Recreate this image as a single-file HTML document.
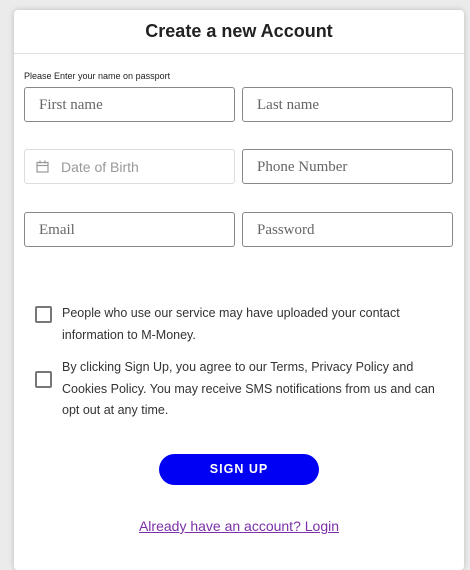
<!DOCTYPE html>
<html><head><style>
body{margin:0;width:470px;height:548px;background:#ebebeb;position:relative;overflow:hidden;font-family:"Liberation Sans",sans-serif}
.card{position:absolute;left:14px;top:10px;width:450px;height:560px;background:#fff;border-radius:4px;box-shadow:0 0 6px rgba(0,0,0,.2)}
.h{position:absolute;left:0;right:0;top:0;height:43px;border-bottom:1px solid #e0e0e0;text-align:center;line-height:42px;font-size:18px;font-weight:bold;color:#222}
.in{position:absolute;box-sizing:border-box;width:211px;height:35px;border:1px solid #888;border-radius:3px;font-family:"Liberation Serif",serif;font-size:15px;color:#666;line-height:35px;padding-left:14px}
.lbl{position:absolute;left:10px;top:61px;font-size:9px;color:#222}
.cb{position:absolute;left:21px;width:13px;height:13px;border:2px solid #777;border-radius:2px}
.t{position:absolute;left:48px;font-size:12.5px;line-height:21.5px;color:#333;width:390px}
.btn{position:absolute;left:145px;top:444px;width:160px;height:31px;background:#0000f5;border-radius:16px;color:#fff;font-weight:bold;font-size:12.5px;letter-spacing:1px;text-align:center;line-height:31px}
.a{position:absolute;left:0;right:0;top:508px;text-align:center;font-size:14px;color:#7b2fa8;text-decoration:underline}
</style></head><body>
<div class="card">
<div class="h">Create a new Account</div>
<div class="lbl">Please Enter your name on passport</div>
<div class="in" style="left:10px;top:77px">First name</div>
<div class="in" style="left:228px;top:77px">Last name</div>
<div class="in" style="left:10px;top:139px;border-color:#ddd;font-family:'Liberation Sans',sans-serif;font-size:14px;color:#999;padding-left:36px">
<svg style="position:absolute;left:11px;top:10px" width="13" height="13" viewBox="0 0 13 13" fill="none" stroke="#999" stroke-width="1.2"><rect x="1" y="2.5" width="11" height="9.5"/><line x1="1" y1="5.5" x2="12" y2="5.5"/><line x1="4" y1="0.5" x2="4" y2="3.5"/><line x1="9" y1="0.5" x2="9" y2="3.5"/></svg>Date of Birth</div>
<div class="in" style="left:228px;top:139px">Phone Number</div>
<div class="in" style="left:10px;top:202px">Email</div>
<div class="in" style="left:228px;top:202px">Password</div>
<div class="cb" style="top:296px"></div>
<div class="t" style="top:293px">People who use our service may have uploaded your contact information to M-Money.</div>
<div class="cb" style="top:361px"></div>
<div class="t" style="top:347px">By clicking Sign Up, you agree to our Terms, Privacy Policy and Cookies Policy. You may receive SMS notifications from us and can opt out at any time.</div>
<div class="btn">SIGN UP</div>
<div class="a">Already have an account? Login</div>
</div>
</body></html>
